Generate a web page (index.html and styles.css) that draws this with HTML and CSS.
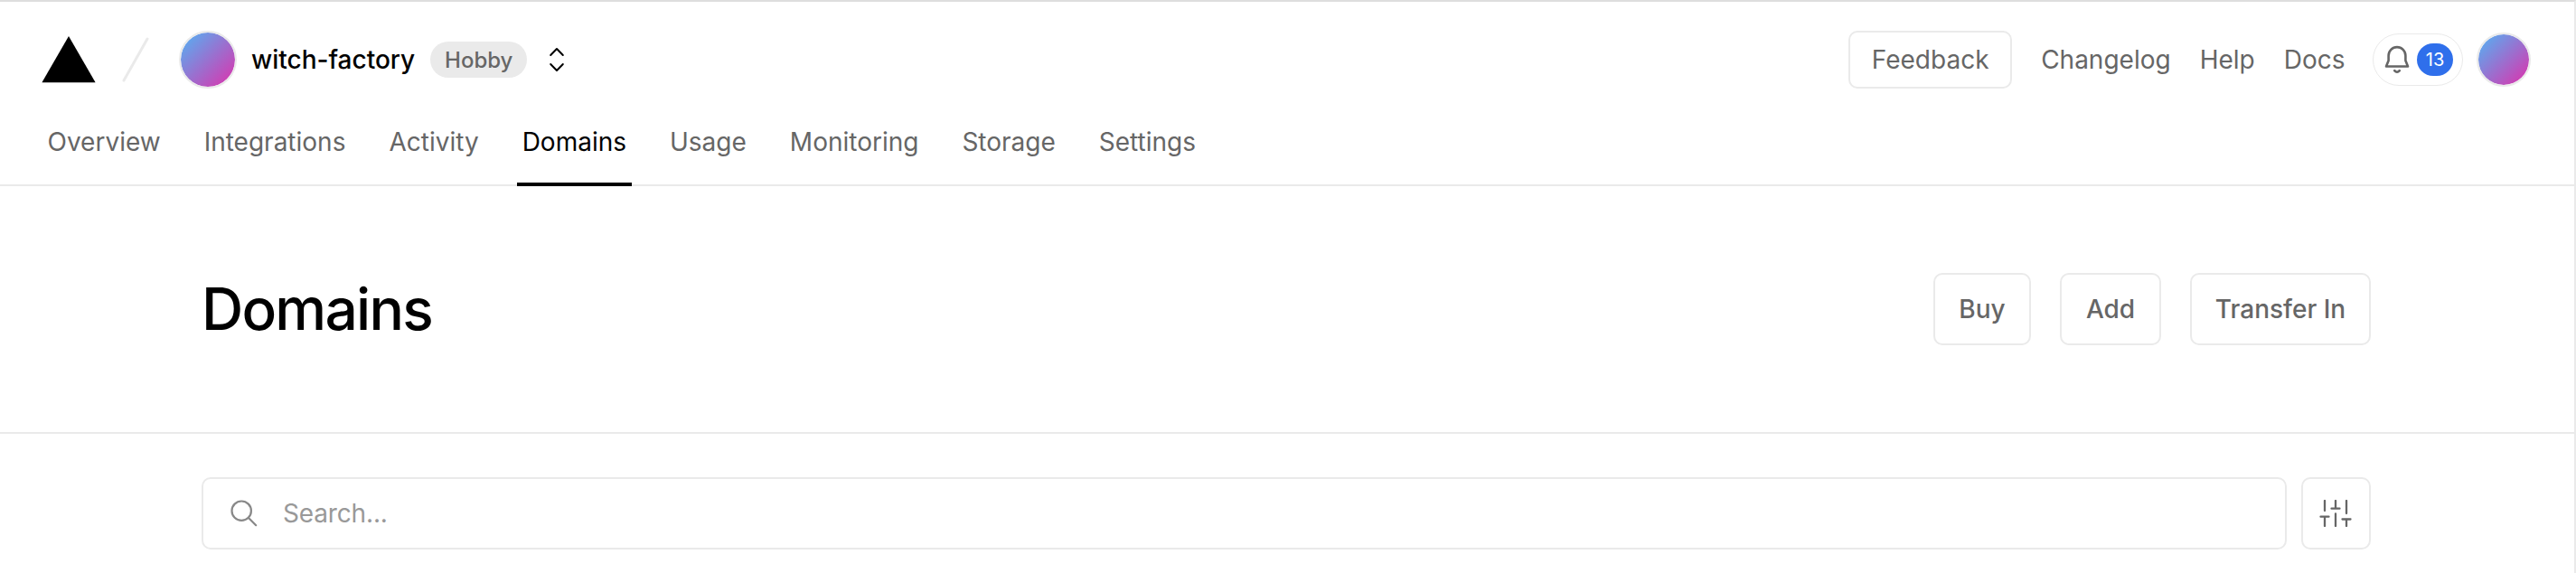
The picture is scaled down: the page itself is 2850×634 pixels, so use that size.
FILE: index.html
```html
<!DOCTYPE html>
<html lang="en">
<head>
<meta charset="utf-8">
<title>Domains</title>
<link rel="stylesheet" href="styles.css">
</head>
<body>
<div class="page">
  <header class="header">
    <div class="topbar">
      <svg class="logo" viewBox="0 0 60 52"><path d="M30 0L59.600 51.300H0.400z"/></svg>
      <svg class="slash" viewBox="0 0 30 50"><path d="M28 2L2 48"/></svg>
      <span class="avatar"></span>
      <span class="team">witch-factory</span>
      <span class="plan">Hobby</span>
      <svg class="switcher" viewBox="0 0 18 28"><path d="M2.200 9L9 2l6.800 7M2.200 19L9 26l6.800-7"/></svg>
      <div class="actions">
        <button class="feedback">Feedback</button>
        <a class="link">Changelog</a>
        <a class="link">Help</a>
        <a class="link">Docs</a>
        <div class="notifications">
          <svg class="bell" viewBox="0 0 28 32"><path d="M2 23.500h24l-2.600-6.500v-5.500a9.400 9.400 0 0 0-18.800 0V17z"/><path d="M11.200 28.200q2.800 3 5.600 0"/></svg>
          <span class="count">13</span>
        </div>
        <span class="avatar avatar-small"></span>
      </div>
    </div>
    <nav class="tabs">
      <a class="tab">Overview</a>
      <a class="tab">Integrations</a>
      <a class="tab">Activity</a>
      <a class="tab tab-active">Domains</a>
      <a class="tab">Usage</a>
      <a class="tab">Monitoring</a>
      <a class="tab">Storage</a>
      <a class="tab">Settings</a>
    </nav>
  </header>
  <section class="title-section">
    <h1 class="title">Domains</h1>
    <div class="buttons">
      <button class="button buy">Buy</button>
      <button class="button add">Add</button>
      <button class="button transfer">Transfer In</button>
    </div>
  </section>
  <main class="content">
    <div class="search">
      <svg class="search-icon" viewBox="0 0 30 30"><circle cx="12.200" cy="12.200" r="10.700"/><path d="M20 20l8.200 8.200"/></svg>
      <span>Search...</span>
    </div>
    <button class="filter">
      <svg class="filter-icon" viewBox="0 0 36 30"><path d="M6 1v11M6 18.700V29M1.500 18.700h9M18 1v8.700M13.500 9.700h9M18 15.500V29M30 1v14M30 21.500V29M25.500 21.500h9"/></svg>
    </button>
  </main>
</div>
</body>
</html>
```
FILE: styles.css
```css
* { box-sizing: border-box; }
body {
  margin: 0;
  background: #fff;
  color: #000;
  font-family: Inter, "Liberation Sans", sans-serif;
  font-size: 28px;
  overflow: hidden;
}
.page {
  height: 634px;
  border-top: 2px solid #dedede;
  border-right: 2px solid #eaeaea;
}
.header { height: 204px; border-bottom: 2px solid #eaeaea; }
.topbar {
  display: flex;
  align-items: center;
  height: 128px;
  padding: 0 48px 0 46px;
}
svg { display: block; flex: none; fill: none; stroke-linecap: round; stroke-linejoin: round; }
.logo { width: 60px; height: 52px; fill: #000; }
.slash { width: 30px; height: 50px; margin-left: 29px; stroke: #eaeaea; stroke-width: 3; }
.avatar {
  width: 64px;
  height: 64px;
  flex: none;
  margin-left: 33px;
  border: 2px solid #eaeaea;
  border-radius: 50%;
  background: linear-gradient(135deg, #50b5f5, #e02fab) padding-box;
}
.avatar-small { width: 60px; height: 60px; margin-left: 15px; }
.team { margin-left: 16px; font-weight: 500; }
.plan {
  display: flex;
  align-items: center;
  justify-content: center;
  width: 107px;
  height: 40px;
  margin-left: 17px;
  border-radius: 20px;
  background: #eaeaea;
  color: #666;
  font-size: 24px;
  font-weight: 500;
}
.switcher { width: 18px; height: 28px; margin-left: 24px; stroke: #000; stroke-width: 2; }
.actions { display: flex; align-items: center; margin-left: auto; }
button { font: inherit; color: #666; background: #fff; border: 2px solid #eaeaea; padding: 0; }
.feedback { width: 181px; height: 64px; border-radius: 10px; }
.link { margin-left: 32px; color: #666; }
.notifications {
  display: flex;
  align-items: center;
  width: 100px;
  height: 58px;
  margin-left: 30.5px;
  padding-left: 12px;
  border: 1px solid #eaeaea;
  border-radius: 29px;
}
.bell { width: 28px; height: 32px; stroke: #666; stroke-width: 2.6; }
.count {
  display: flex;
  align-items: center;
  justify-content: center;
  width: 40px;
  height: 36px;
  margin-left: 8px;
  border-radius: 18px;
  background: #2f6feb;
  color: #fff;
  font-size: 20px;
}
.tabs { display: flex; height: 76px; padding-left: 28.5px; }
.tab { position: relative; padding: 10px 24px 0; line-height: 34px; color: #666; }
.tab-active { color: #000; }
.tab-active::after {
  content: "";
  position: absolute;
  left: 18px;
  right: 18px;
  bottom: 0;
  height: 4px;
  background: #000;
}
.title-section {
  display: flex;
  align-items: center;
  justify-content: space-between;
  height: 274px;
  padding: 0 225px 0 223px;
  border-bottom: 2px solid #eaeaea;
}
.title { margin: 0; font-size: 64px; font-weight: 500; letter-spacing: -1.75px; line-height: 80px; }
.buttons { display: flex; gap: 32px; }
.button { height: 80px; border-radius: 10px; font-weight: 500; }
.buy { width: 108px; }
.add { width: 112px; }
.transfer { width: 200px; }
.content { display: flex; gap: 16px; padding: 48px 225px 0 223px; }
.search {
  display: flex;
  flex: 1;
  align-items: center;
  gap: 28px;
  height: 80px;
  padding-left: 30px;
  border: 2px solid #eaeaea;
  border-radius: 10px;
  color: #999;
  letter-spacing: -0.15px;
}
.search-icon { width: 30px; height: 30px; stroke: #888; stroke-width: 2.2; }
.filter { display: flex; align-items: center; justify-content: center; width: 77px; height: 80px; padding-right: 1px; border-radius: 10px; }
.filter-icon { width: 36px; height: 30px; stroke: #666; stroke-width: 2.3; }
```
